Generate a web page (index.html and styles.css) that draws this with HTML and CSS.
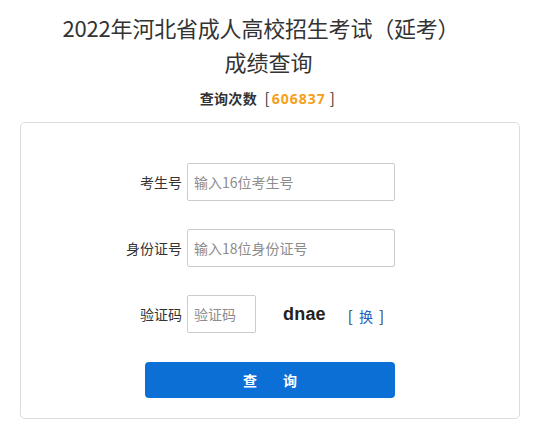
FILE: index.html
```html
<!DOCTYPE html>
<html lang="zh-CN">
<head>
    <meta charset="UTF-8">
    <meta name="viewport" content="width=device-width, initial-scale=1.0">
    <title>成绩查询</title>
    <link rel="stylesheet" href="styles.css">
</head>
<body>
    <header class="page-head">
        <h1 class="page-title"><span class="title-main">2022年河北省成人高校招生考试（延考）</span><span class="title-sub">成绩查询</span></h1>
        <p class="query-count">查询次数 <span class="bracket">[</span><span class="count-num">606837</span><span class="bracket">]</span></p>
    </header>

    <main class="query-card">
        <form class="query-form" onsubmit="return false;">
            <div class="form-row">
                <label class="form-label" for="ksh">考生号</label>
                <input type="text" id="ksh" class="form-input" placeholder="输入16位考生号">
            </div>
            <div class="form-row">
                <label class="form-label" for="sfzh">身份证号</label>
                <input type="text" id="sfzh" class="form-input" placeholder="输入18位身份证号">
            </div>
            <div class="form-row">
                <label class="form-label" for="yzm">验证码</label>
                <input type="text" id="yzm" class="form-input captcha-input" placeholder="验证码">
                <span class="captcha-img">dnae</span>
                <a href="#" class="captcha-change">[<span>换</span>]</a>
            </div>
            <div class="form-row">
                <button type="submit" class="submit-btn">查询</button>
            </div>
        </form>
    </main>
</body>
</html>
```

FILE: styles.css
```css
body {
    margin: 0;
    padding: 0;
    font-family: "Noto Sans CJK SC", "Noto Sans", sans-serif;
    color: #333;
    background: #fff;
}

.page-head {
    text-align: center;
    padding-top: 10px;
}

.page-title {
    margin: 0;
    font-size: 22px;
    font-weight: normal;
    line-height: 34px;
    color: #333;
}

.title-main {
    display: block;
    padding-right: 15px;
    letter-spacing: -0.2px;
}

.title-sub {
    display: block;
}

.query-count {
    height: 20px;
    margin: 10px 0 0;
    font-size: 14px;
    font-weight: bold;
    line-height: 20px;
    color: #333;
    letter-spacing: 0.3px;
}

.bracket {
    font-weight: normal;
    font-size: 15px;
    line-height: 1;
    margin: 0 2px 0 4px;
}

.count-num {
    color: #f5a01a;
    font-family: "Open Sans", sans-serif;
    letter-spacing: 1px;
}

.query-card {
    box-sizing: border-box;
    width: 500px;
    height: 297px;
    margin: 14px 0 0 20px;
    border: 1px solid #ddd;
    border-radius: 5px;
    padding: 40px 0 0;
}

.query-form {
    display: flex;
    flex-direction: column;
    gap: 28px;
}

.form-row {
    display: flex;
    align-items: center;
    height: 38px;
}

.form-label {
    width: 161px;
    padding-right: 5px;
    text-align: right;
    font-size: 14px;
    color: #333;
}

.form-input {
    box-sizing: border-box;
    width: 208px;
    height: 38px;
    border: 1px solid #ccc;
    border-radius: 2px;
    padding: 0 6px;
    font-family: inherit;
    font-size: 14px;
    color: #333;
    outline: none;
}

.form-input::placeholder {
    color: #8c8c8c;
}

.captcha-input {
    width: 69px;
}

.captcha-img {
    margin-left: 27px;
    font-family: "Liberation Sans", Arial, sans-serif;
    font-weight: bold;
    font-size: 18px;
    color: #222;
    letter-spacing: 0.2px;
}

.captcha-change {
    margin: 2px 0 0 22px;
    font-size: 15px;
    color: #333;
    text-decoration: none;
}

.captcha-change span {
    margin: 0 6px;
    font-size: 14px;
    color: #1a62c7;
}

.submit-btn {
    width: 250px;
    height: 36px;
    margin-left: 124px;
    border: none;
    border-radius: 4px;
    padding: 0 0 0 26px;
    background: #0c6fd6;
    color: #fff;
    font-family: inherit;
    font-size: 14px;
    font-weight: bold;
    letter-spacing: 26px;
    cursor: pointer;
}
```
